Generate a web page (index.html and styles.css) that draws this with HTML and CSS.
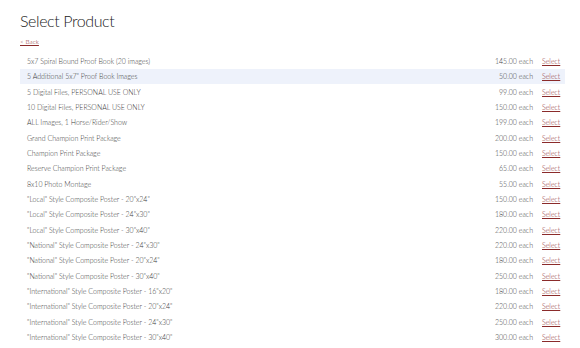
FILE: index.html
```html
<!DOCTYPE html>
<html lang="en">
<head>
    <meta charset="UTF-8">
    <meta name="viewport" content="width=device-width, initial-scale=1.0">
    <title>Select Product</title>
    <link rel="stylesheet" href="styles.css">
</head>
<body>
    <div class="page">
        <h1 class="title">Select Product</h1>
        <a class="back" href="#">&lt; Back</a>

        <table class="products">
            <tr><td class="name">5x7 Spiral Bound Proof Book (20 images)</td><td class="price">145.00 each</td><td class="pick"><a href="#">Select</a></td></tr>
            <tr class="hover"><td class="name">5 Additional 5x7" Proof Book Images</td><td class="price">50.00 each</td><td class="pick"><a href="#">Select</a></td></tr>
            <tr><td class="name">5 Digital Files, PERSONAL USE ONLY</td><td class="price">99.00 each</td><td class="pick"><a href="#">Select</a></td></tr>
            <tr><td class="name">10 Digital Files, PERSONAL USE ONLY</td><td class="price">150.00 each</td><td class="pick"><a href="#">Select</a></td></tr>
            <tr><td class="name">ALL Images, 1 Horse/Rider/Show</td><td class="price">199.00 each</td><td class="pick"><a href="#">Select</a></td></tr>
            <tr><td class="name">Grand Champion Print Package</td><td class="price">200.00 each</td><td class="pick"><a href="#">Select</a></td></tr>
            <tr><td class="name">Champion Print Package</td><td class="price">150.00 each</td><td class="pick"><a href="#">Select</a></td></tr>
            <tr><td class="name">Reserve Champion Print Package</td><td class="price">65.00 each</td><td class="pick"><a href="#">Select</a></td></tr>
            <tr><td class="name">8x10 Photo Montage</td><td class="price">55.00 each</td><td class="pick"><a href="#">Select</a></td></tr>
            <tr><td class="name">"Local" Style Composite Poster - 20"x24"</td><td class="price">150.00 each</td><td class="pick"><a href="#">Select</a></td></tr>
            <tr><td class="name">"Local" Style Composite Poster - 24"x30"</td><td class="price">180.00 each</td><td class="pick"><a href="#">Select</a></td></tr>
            <tr><td class="name">"Local" Style Composite Poster - 30"x40"</td><td class="price">220.00 each</td><td class="pick"><a href="#">Select</a></td></tr>
            <tr><td class="name">"National" Style Composite Poster - 24"x30"</td><td class="price">220.00 each</td><td class="pick"><a href="#">Select</a></td></tr>
            <tr><td class="name">"National" Style Composite Poster - 20"x24"</td><td class="price">180.00 each</td><td class="pick"><a href="#">Select</a></td></tr>
            <tr><td class="name">"National" Style Composite Poster - 30"x40"</td><td class="price">250.00 each</td><td class="pick"><a href="#">Select</a></td></tr>
            <tr><td class="name">"International" Style Composite Poster - 16"x20"</td><td class="price">180.00 each</td><td class="pick"><a href="#">Select</a></td></tr>
            <tr><td class="name">"International" Style Composite Poster - 20"x24"</td><td class="price">220.00 each</td><td class="pick"><a href="#">Select</a></td></tr>
            <tr><td class="name">"International" Style Composite Poster - 24"x30"</td><td class="price">250.00 each</td><td class="pick"><a href="#">Select</a></td></tr>
            <tr><td class="name">"International" Style Composite Poster - 30"x40"</td><td class="price">300.00 each</td><td class="pick"><a href="#">Select</a></td></tr>
        </table>
    </div>
</body>
</html>
```

FILE: styles.css
```css
body {
    margin: 0;
    background-color: #fff;
    color: #3a3a3a;
    font-family: "Lato", "Noto Sans", sans-serif;
    font-weight: 300;
}
.page {
    padding: 10px 15px 0 20px;
}
.title {
    margin: 0;
    font-size: 16px;
    font-weight: 300;
    letter-spacing: -0.4px;
    line-height: 22px;
    color: #222;
}
.back {
    display: block;
    width: fit-content;
    margin-top: 6px;
    font-size: 6.5px;
    line-height: 8px;
    color: #8b2b2b;
}
.products {
    width: 100%;
    margin-top: 7.5px;
    border-collapse: collapse;
    font-size: 7px;
}
.products td {
    height: 15.33px;
    padding: 0;
    white-space: nowrap;
}
.products tr.hover {
    background-color: #eef2fb;
}
.name {
    padding-left: 7px !important;
}
.price {
    text-align: right;
}
.pick {
    width: 20px;
    padding: 0 3px 0 9px !important;
}
.pick a {
    color: #8b2b2b;
}
```
